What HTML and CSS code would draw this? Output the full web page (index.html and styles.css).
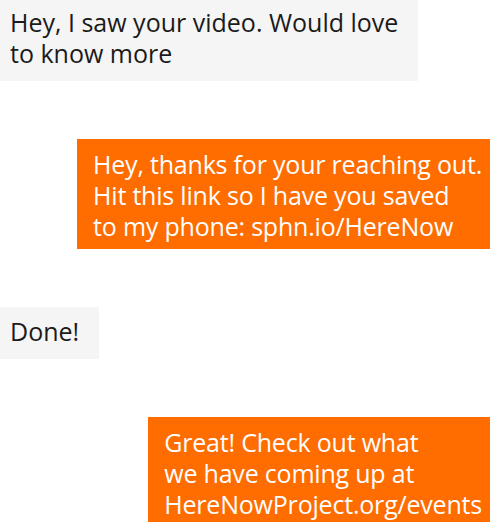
FILE: index.html
```html
<!DOCTYPE html>
<html lang="en">
<head>
<meta charset="utf-8">
<title>Chat</title>
<link rel="stylesheet" href="styles.css">
</head>
<body>
<main class="chat">
  <div class="msg msg-in">Hey, I saw your video. Would love<br>to know more</div>
  <div class="msg msg-out">Hey, thanks for your reaching out.<br>Hit this link so I have you saved<br>to my phone: sphn.io/HereNow</div>
  <div class="msg msg-in">Done!</div>
  <div class="msg msg-out">Great! Check out what<br>we have coming up at<br>HereNowProject.org/events</div>
</main>
</body>
</html>
```
FILE: styles.css
```css
html, body {
  margin: 0;
  padding: 0;
  background: #ffffff;
  overflow: hidden;
}
.chat {
  display: flex;
  flex-direction: column;
  gap: 58px;
  margin-top: -2px;
  font-family: "Open Sans", "Liberation Sans", sans-serif;
  font-size: 25px;
  line-height: 31px;
}
.msg {
  white-space: nowrap;
}
.msg-in {
  align-self: flex-start;
  background: #f5f5f5;
  color: #1b1b1b;
  padding: 9px 20px 12px 10px;
}
.msg-out {
  align-self: flex-end;
  background: #ff6c00;
  color: #ffffff;
  padding: 10px 20px 7px 16px;
  margin-right: -12px;
  letter-spacing: -0.2px;
}
```
